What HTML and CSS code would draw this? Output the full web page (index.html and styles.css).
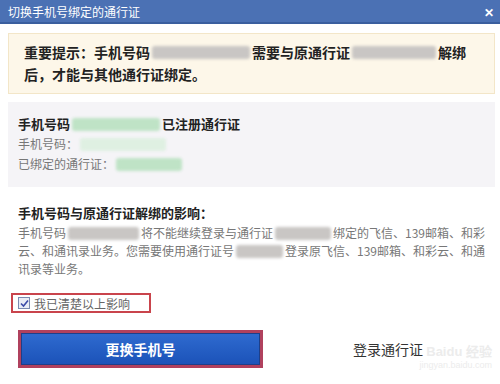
FILE: index.html
```html
<!DOCTYPE html>
<html lang="zh-CN">
<head>
    <meta charset="UTF-8">
    <title>切换手机号绑定的通行证</title>
    <link rel="stylesheet" href="styles.css">
</head>
<body>
    <div class="dialog">
        <!-- Barre de titre -->
        <div class="titlebar">
            <span class="title">切换手机号绑定的通行证</span>
            <span class="close">✕</span>
        </div>

        <div class="body">
            <div class="notice">
                <div class="line">重要提示：手机号码<span class="blur gray" style="width: 98px"></span>需要与原通行证<span class="blur gray" style="width: 84px"></span>解绑</div>
                <div class="line">后，才能与其他通行证绑定。</div>
            </div>

            <div class="info">
                <div class="info-title">手机号码<span class="blur green" style="width: 88px"></span>已注册通行证</div>
                <div class="info-row">手机号码：<span class="blur light" style="width: 86px"></span></div>
                <div class="info-row">已绑定的通行证：<span class="blur green" style="width: 66px"></span></div>
            </div>

            <div class="effects">
                <div class="effects-title">手机号码与原通行证解绑的影响：</div>
                <div class="para">手机号码<span class="blur gray" style="width: 76px"></span>将不能继续登录与通行证<span class="blur gray" style="width: 60px"></span>绑定的飞信、139邮箱、和彩</div>
                <div class="para">云、和通讯录业务。您需要使用通行证号<span class="blur gray" style="width: 70px"></span>登录原飞信、139邮箱、和彩云、和通</div>
                <div class="para">讯录等业务。</div>
            </div>

            <label class="confirm">
                <span class="checkbox">
                    <svg width="9" height="9" viewBox="0 0 9 9"><path d="M1 4.5 L3.5 7 L8 1.5" fill="none" stroke="#3a4aa8" stroke-width="1.6"/></svg>
                </span>
                我已清楚以上影响
            </label>

            <div class="actions">
                <button class="btn">更换手机号</button>
                <a href="#" class="link">登录通行证</a>
            </div>
        </div>

        <div class="watermark">
            <span class="wm-logo">Bai<b>du</b> 经验</span>
            <span class="wm-url">jingyan.baidu.com</span>
        </div>
    </div>
</body>
</html>
```

FILE: styles.css
```css
body {
    margin: 0;
    font-family: "Noto Sans CJK SC", "Liberation Sans", sans-serif;
    background-color: #ffffff;
}

.dialog {
    width: 500px;
    height: 384px;
    position: relative;
    overflow: hidden;
}

.titlebar {
    height: 22px;
    background-color: #4b71b4;
    border-bottom: 2px solid #3a5e9e;
    display: flex;
    align-items: center;
    justify-content: space-between;
    padding: 0 6px 0 8px;
    color: white;
}

.title {
    font-size: 12px;
}

.close {
    font-size: 12px;
    font-weight: bold;
}

.body {
    padding: 9px 5px 0 8px;
}

.notice {
    background-color: #fdf7e9;
    border: 1px solid #f3e6c8;
    padding: 7px 15px 8px;
    font-size: 14px;
    font-weight: bold;
    color: #222;
}

.notice .line {
    line-height: 22px;
    display: flex;
    align-items: center;
    white-space: nowrap;
}

.blur {
    display: inline-block;
    height: 13px;
    border-radius: 3px;
    filter: blur(1.5px);
    margin: 0 2px;
}

.blur.gray {
    background-color: #c9c6c4;
}

.blur.green {
    background-color: #bfe3c6;
}

.blur.light {
    background-color: #dff0e2;
}

.info {
    margin-top: 8px;
    background-color: #f5f4f7;
    padding: 12px 10px 13px;
    font-size: 12px;
    color: #777;
}

.info-title {
    font-weight: bold;
    color: #222;
    font-size: 13px;
    line-height: 20px;
    display: flex;
    align-items: center;
}

.info-row {
    line-height: 20px;
    display: flex;
    align-items: center;
}

.effects {
    padding: 16px 10px 0;
    font-size: 12px;
    color: #777;
}

.effects-title {
    font-weight: bold;
    color: #222;
    font-size: 13px;
    line-height: 20px;
    margin-bottom: 1px;
}

.para {
    line-height: 18px;
    display: flex;
    align-items: center;
    white-space: nowrap;
}

.confirm {
    margin: 15px 0 0 3px;
    width: 131px;
    height: 16px;
    border: 2px solid #c9444c;
    display: flex;
    align-items: center;
    gap: 4px;
    padding-left: 5px;
    font-size: 12px;
    color: #666;
}

.checkbox {
    width: 10px;
    height: 10px;
    border: 1px solid #7a8ab0;
    background-color: #e8ecf6;
    display: flex;
    align-items: center;
    justify-content: center;
}

.actions {
    margin-top: 17px;
    display: flex;
    align-items: center;
    padding-left: 10px;
}

.btn {
    width: 245px;
    height: 38px;
    border: 3px solid #b0415e;
    box-shadow: inset 0 0 0 1px #1d3f8a;
    background: linear-gradient(#2f6bd0, #1b52b8);
    color: white;
    font-family: "Noto Sans CJK SC", sans-serif;
    font-size: 14px;
    font-weight: bold;
    cursor: pointer;
}

.link {
    margin-left: 90px;
    font-size: 14px;
    color: #333;
    text-decoration: none;
}

.watermark {
    position: absolute;
    right: 8px;
    bottom: 14px;
    display: flex;
    flex-direction: column;
    align-items: flex-end;
    color: #ececec;
    font-family: "Liberation Sans", sans-serif;
}

.wm-logo {
    font-size: 13px;
    font-weight: bold;
}

.wm-url {
    font-size: 9px;
}
```
